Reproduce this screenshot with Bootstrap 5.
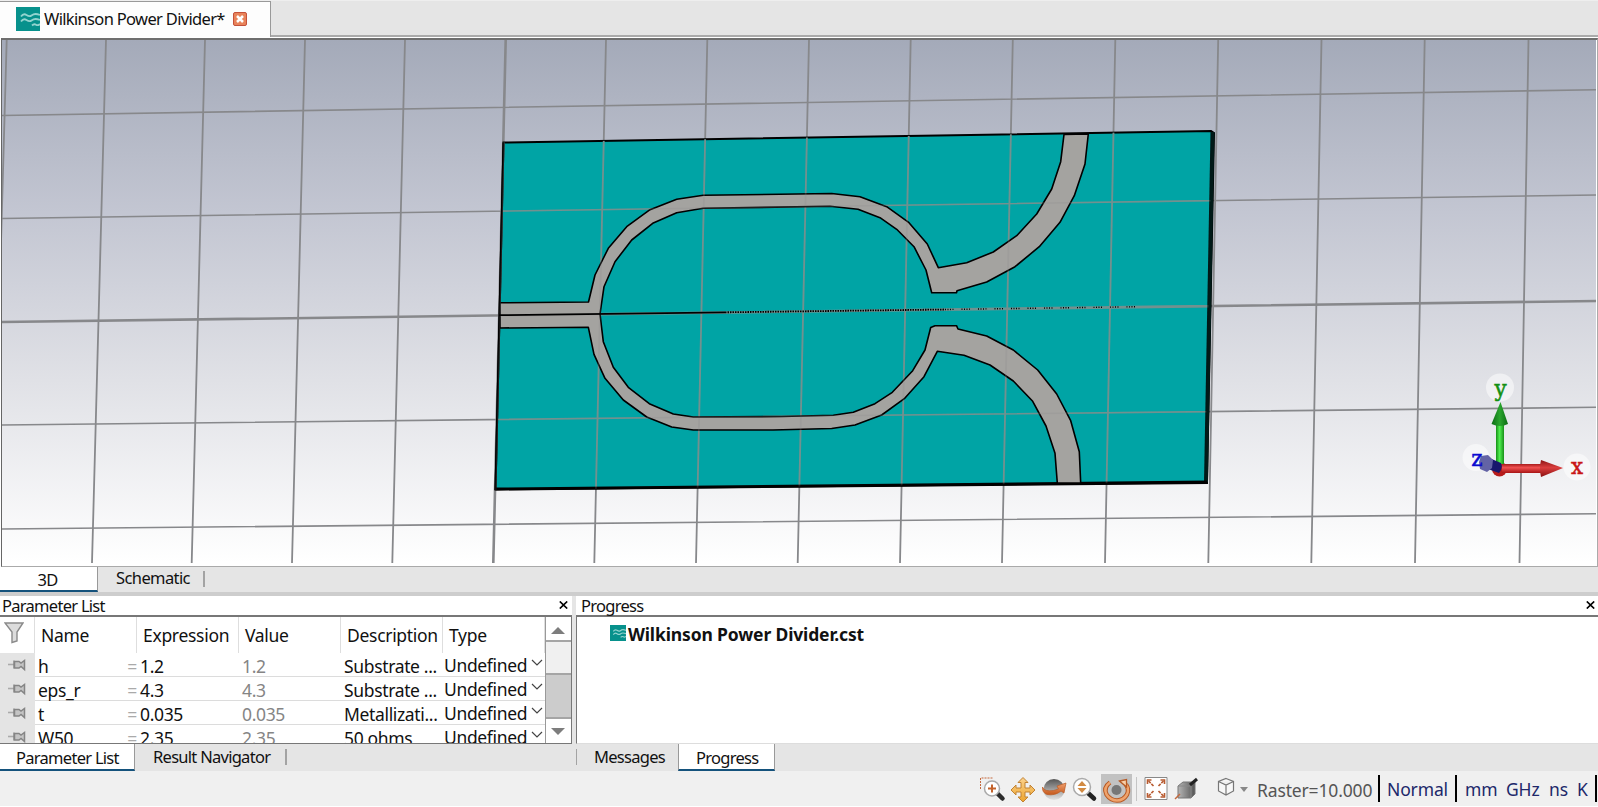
<!DOCTYPE html>
<html lang="en">
<head>
<meta charset="utf-8">
<meta name="viewport" content="width=device-width, initial-scale=1">
<title>Wilkinson Power Divider</title>
<link href="https://cdn.jsdelivr.net/npm/bootstrap@5.3.0/dist/css/bootstrap.min.css" rel="stylesheet">
<script src="https://cdn.jsdelivr.net/npm/bootstrap@5.3.0/dist/js/bootstrap.bundle.min.js"></script>
<style>
  body{height:807px;overflow:hidden;background:#fff;color:#111;font-family:"Noto Sans","Open Sans",sans-serif;font-size:17px;line-height:20px;white-space:nowrap}
  svg{display:block;flex:none}
  .ui{font-size:16.5px;letter-spacing:-.72px}
  .doc-strip{height:37px;background:#e5e5e5;border-bottom:2px solid #aaa;border-top:1px solid #eee}
  .doc-tab{width:271px;height:36px;background:#fdfdfd;border-top:1px solid #999;border-right:1px solid #999;padding:0 0 2px 16px;letter-spacing:-.67px}
  .view{height:529px;border:1px solid #aaa;border-top:2px solid #6e6e6e;border-left:1px solid #666;margin-top:1px;padding:0 1px 3px 0;margin-left:1px}
  .strip{background:#e5e5e5}
  .view-tabs{height:25px}
  .tab-on{background:#fff;border-right:1px solid #999;border-bottom:2px solid #14527c}
  .splitter{height:4px;background:#cdcdcd}
  .dock{height:175px;background:#e5e5e5}
  .dock-title{height:19px;background:#fff}
  .tick{width:2px;height:16px;background:#a3a3a3}
  .dock-body{height:129px;background:#fff;border:1px solid #777;border-top:2px solid #777;overflow:hidden}
  .grid-head{height:36px}
  .c0{width:35px}.c1,.c2,.c3,.c4,.c5{width:102px}
  .grid-head>div{border-right:1px solid #dedede;padding:8px 0 0 6px;letter-spacing:-.3px;font-size:17.5px}
  .prow{height:24px;font-size:17.5px;letter-spacing:-.35px}
  .prow>div{border-bottom:1px solid #dcdcdc;padding:3px 0 0 3px}
  .prow>.c0{background:#e4e4e4;border:0;padding:5px 0 0 8px}
  .prow>.c5{padding-top:2px}
  .faded{color:#858585}
  .eq{color:#aaa}
  .sbar{width:26px;background:#ccc;border-left:1px solid #999}
  .sbtn{height:25px;background:#fff;border-bottom:2px solid #a5a5a5}
  .status{height:35px;background:#f0f0f0}
  .status .txt{font-size:17.5px;color:#20286a;letter-spacing:-.15px}
  .vbar{width:2px;height:27px;background:#000}
</style>
</head>
<body>
<svg width="0" height="0" style="position:absolute">
  <defs>
    <symbol id="wave" viewBox="0 0 24 24"><path fill="#07918c" d="M0 0h24v24H0z"/><path d="M5 9.500q2.500-3.500 5.500-1.500t5 .5 4-1.500 4.500 1M5 14.500q2.500-3.500 5.500-1.500t5 .5 4-1.500 4.500 1M16 18.500q2-2 4-.8t4-.7" fill="none" stroke="#93d4cf" stroke-width="1.800"/></symbol>
    <symbol id="pin" viewBox="0 0 18 14"><path d="M0 6.500h6" stroke="#aaa" stroke-width="1.600"/><path d="M6 2.500v8M6.500 3.500h4.500l2 1.500 3.500-2.500v9L13 8.500l-2 1.500H6.500z" fill="#c4c4c4" stroke="#858585" stroke-width="1.500"/></symbol>
    <symbol id="chev" viewBox="0 0 12 8"><path d="M1 1l5 5 5-5" fill="none" stroke="#444" stroke-width="1.200"/></symbol>
    <symbol id="cross" viewBox="0 0 9 8"><path d="M.8.5l7.400 7M8.200.5l-7.400 7" stroke="#000" stroke-width="1.700"/></symbol>
    <linearGradient id="gold" x1="0" y1="0" x2="0" y2="1"><stop stop-color="#fbd28e"/><stop offset="1" stop-color="#eda52e"/></linearGradient>
    <linearGradient id="steel" x1="0" y1="0" x2="0" y2="1"><stop stop-color="#555"/><stop offset=".45" stop-color="#999"/><stop offset="1" stop-color="#e2e2e2"/></linearGradient>
    <linearGradient id="slab"><stop stop-color="#b5b5b5"/><stop offset="1" stop-color="#555"/></linearGradient>
    <linearGradient id="orange" x1="0" y1="0" x2="0" y2="1"><stop stop-color="#f0a070"/><stop offset="1" stop-color="#c4581c"/></linearGradient>
  </defs>
</svg>

<div class="doc-strip ui">
  <div class="doc-tab d-flex align-items-center">
    <svg width="24" height="24"><use href="#wave"/></svg>
    <span class="ms-1" style="width:189px">Wilkinson Power Divider*</span>
    <svg width="14" height="14" viewBox="0 0 14 14"><rect x=".5" y=".5" width="13" height="13" rx="1.500" fill="#e8835a" stroke="#c4513a"/><path d="M4 4l6 6M10 4l-6 6" stroke="#fff" stroke-width="2.500"/></svg>
  </div>
</div>

<div class="view">
<svg width="1594" height="523" viewBox="2 40 1594 523" preserveAspectRatio="none">
  <defs>
    <linearGradient id="sky" x1="0" y1="0" x2="0" y2="1"><stop stop-color="#a4aab9"/><stop offset=".33" stop-color="#c3c6d2"/><stop offset=".65" stop-color="#e0e1e6"/><stop offset="1" stop-color="#fff"/></linearGradient>
    <linearGradient id="gx" x1="0" y1="0" x2="0" y2="1"><stop stop-color="#a91c1c"/><stop offset=".4" stop-color="#f05050"/><stop offset="1" stop-color="#a81515"/></linearGradient>
    <linearGradient id="gy"><stop stop-color="#159015"/><stop offset=".45" stop-color="#50f050"/><stop offset="1" stop-color="#189018"/></linearGradient>
    <linearGradient id="gyh"><stop stop-color="#0c6c14"/><stop offset=".5" stop-color="#29a52d"/><stop offset="1" stop-color="#0d6c14"/></linearGradient>
    <linearGradient id="gxh" x1="0" y1="0" x2="0" y2="1"><stop stop-color="#8c1414"/><stop offset=".45" stop-color="#da3e3e"/><stop offset="1" stop-color="#8a1010"/></linearGradient>
    <clipPath id="brd"><path d="M503.500 142.500L1212 131 1205 482 495.500 490z"/></clipPath>
    <g id="mesh">
      <path d="M6.700 40L-8 563M106 40L92 563M205 40L191.700 563M305 40L292 563M405 40L392.300 563M606 40L594.300 563M707.300 40L696 563M809 40L797.700 563M910.700 40L900 563M1012.800 40L1002 563M1115.300 40L1105 563M1218.200 40L1208.300 563M1321.500 40L1311.300 563M1424.700 40L1415 563M1528.500 40L1519.500 563" stroke-width="1.800"/>
      <path d="M2 115.500L1596 89.700M2 218.500L1596 195M2 425L1596 407.300M2 529L1596 513.700" stroke-width="1.600"/>
      <path d="M505.700 40L493.300 563M2 322L1596 301" stroke-width="2.600"/>
    </g>
  </defs>
  <path fill="url(#sky)" d="M2 40h1594v523H2z"/>
  <use href="#mesh" stroke="#87888b"/>
  <path d="M503.500 142.500L1211 131l3 2L1207 483 495.500 489.500z" fill="#00a4a6" stroke="#000" stroke-width="2"/>
  <use href="#mesh" stroke="#6c9491" clip-path="url(#brd)"/>
  <path d="M1212.500 132L1206 482" stroke="#011a18" stroke-width="4"/><path d="M495.500 489L1207 482" stroke="#000" stroke-width="2.800"/>
  <path d="M503.500 142.500L495.500 490" stroke="#000" stroke-width="2"/>
  <path fill="#a5a3a0" stroke="#000" stroke-width="1.600" stroke-linejoin="round" d="M500 302.800L588.500 302 595 275 608.300 248.300 626.700 226.700 650 209.700 676.700 199.300 703.300 195.300 831.700 193.500 860 196.700 886.700 206.700 909 222.700 927.300 244 938.300 267.700 966.700 262.700 993.300 252 1016.700 235.700 1036.700 214 1051.700 189 1060.700 161.700 1064 134.500 1088.300 134 1085 164 1074.300 195.700 1060 222.300 1039.300 246.700 1015 266.700 986.700 282 957 290.700 956.500 292.700 931.700 292.700 926 270 914 246.700 896.700 229.300 880 217.700 858 209.300 830 206.300 703.300 208.300 676.700 212.700 652.700 223.300 631.700 240 615 261.700 604 286.700 600 314 603.300 341.700 613.300 367.300 628.300 387.300 649.300 403.700 673.300 414 693.300 417 781.700 416.500 833.300 415.300 853.300 412.300 875 403.700 892.300 392.300 912.700 370.700 925 350 930.700 327.500 935 325.700 956.500 325.700 958 329 986.700 336 1013.300 350 1037.700 370 1056.700 394 1070.700 420.700 1079.300 451.700 1080.700 483 1057.300 483 1055 453.300 1046 426 1032.700 401.300 1013.300 381 990 365 964 355.300 937.300 351.300 924 376.700 904.300 398.700 881.700 415 855 425 831.700 428.500 773 430 693.300 430 671.700 427 646.700 417 623.300 400 605 378.300 594 354.300 588.300 327.200 500 328z"/>
  <use href="#mesh" stroke="#888" opacity=".22" clip-path="url(#brd)"/>
  <path d="M499 315.200L725 312.300" stroke="#000" stroke-width="1.700"/>
  <path d="M725 312.300L945 309.500" stroke="#000" stroke-width="1.800" stroke-dasharray="1.500 1"/>
  <path d="M945 309.500L1140 306.700" stroke="#000" stroke-width="1.400" stroke-dasharray="1 1.500 1 1.500 1 1.500 1 8"/>
  <g fill="#fff" fill-opacity=".5"><circle cx="1500" cy="387.500" r="14"/><circle cx="1476" cy="457.500" r="13.500"/><circle cx="1577" cy="467" r="13.500"/></g>
  <circle cx="1499.500" cy="469" r="7.500" fill="#b71b1b"/>
  <path d="M1496 422h8v42h-8z" fill="url(#gy)"/><path d="M1500.500 402l7.500 22q-8 4-16.500 0z" fill="url(#gyh)"/>
  <path d="M1502 464h39v9h-39z" fill="url(#gx)"/><path d="M1563 468l-22-8q-2 8 0 17z" fill="url(#gxh)"/>
  <path d="M1487 457l14 6q2 5-2 10l-14-5z" fill="#17176d"/><path d="M1481 456l7-1 5 5-1 8-5 4-7-3-1-7z" fill="#6363a5"/>
  <g font-family="'DejaVu Serif',serif" text-anchor="middle" font-size="21.500" stroke-width=".5"><text x="1500.500" y="395.500" fill="#129012" stroke="#129012">y</text><text x="1477" y="465.500" fill="#0b0bd0" stroke="#0b0bd0">z</text><text x="1577" y="474" fill="#c91616" stroke="#c91616">x</text></g>
</svg>
</div>

<div class="strip view-tabs ui d-flex">
  <div class="tab-on text-center" style="width:98px;padding:3px 2px 0 0">3D</div>
  <div style="width:105px;padding:1px 0 0 18px;letter-spacing:-.6px">Schematic</div>
  <div class="tick" style="margin-top:4px"></div>
</div>
<div class="splitter"></div>

<div class="dock d-flex">
  <div style="width:572px">
    <div class="dock-title ui d-flex justify-content-between" style="padding-left:2px"><span>Parameter List</span><svg width="9" height="8" style="margin:5px 4px 0 0"><use href="#cross"/></svg></div>
    <div class="dock-body d-flex border-start-0">
      <div style="width:545px">
        <div class="grid-head d-flex">
          <div class="c0" style="padding:5px 0 0 4px"><svg width="20" height="22" viewBox="0 0 20 22"><path d="M1 1h18l-6 9v9l-5 1.500V10z" fill="#dcdcdc" stroke="#8a8a8a" stroke-width="1.400"/></svg></div>
          <div class="c1">Name</div><div class="c2">Expression</div><div class="c3">Value</div><div class="c4">Description</div><div class="c5">Type</div>
        </div>
        <div class="prow d-flex"><div class="c0"><svg width="18" height="14"><use href="#pin"/></svg></div><div class="c1 d-flex justify-content-between"><span>h</span><span class="eq">=</span></div><div class="c2">1.2</div><div class="c3 faded">1.2</div><div class="c4">Substrate ...</div><div class="c5 d-flex ps-0"><span class="ps-0" style="width:87px;margin-left:1px">Undefined</span><svg width="12" height="8" class="mt-1"><use href="#chev"/></svg></div></div>
        <div class="prow d-flex"><div class="c0"><svg width="18" height="14"><use href="#pin"/></svg></div><div class="c1 d-flex justify-content-between"><span>eps_r</span><span class="eq">=</span></div><div class="c2">4.3</div><div class="c3 faded">4.3</div><div class="c4">Substrate ...</div><div class="c5 d-flex ps-0"><span style="width:87px;margin-left:1px">Undefined</span><svg width="12" height="8" class="mt-1"><use href="#chev"/></svg></div></div>
        <div class="prow d-flex"><div class="c0"><svg width="18" height="14"><use href="#pin"/></svg></div><div class="c1 d-flex justify-content-between"><span>t</span><span class="eq">=</span></div><div class="c2">0.035</div><div class="c3 faded">0.035</div><div class="c4">Metallizati...</div><div class="c5 d-flex ps-0"><span style="width:87px;margin-left:1px">Undefined</span><svg width="12" height="8" class="mt-1"><use href="#chev"/></svg></div></div>
        <div class="prow d-flex"><div class="c0"><svg width="18" height="14"><use href="#pin"/></svg></div><div class="c1 d-flex justify-content-between"><span>W50</span><span class="eq">=</span></div><div class="c2">2.35</div><div class="c3 faded">2.35</div><div class="c4">50 ohms</div><div class="c5 d-flex ps-0"><span style="width:87px;margin-left:1px">Undefined</span><svg width="12" height="8" class="mt-1"><use href="#chev"/></svg></div></div>
      </div>
      <div class="sbar d-flex flex-column">
        <div class="sbtn"><svg width="25" height="23" viewBox="0 0 25 23"><path d="M5 17h14l-7-7z" fill="#7d7d7d"/></svg></div>
        <div class="sbtn" style="background:#f0f0f0;height:33px"></div>
        <div class="mt-auto" style="height:26px;background:#fff;border-top:2px solid #a5a5a5"><svg width="25" height="23" viewBox="0 0 25 23"><path d="M5 9h14l-7 7z" fill="#7d7d7d"/></svg></div>
      </div>
    </div>
    <div class="ui d-flex" style="height:27px">
      <div class="tab-on" style="width:135px;padding:4px 0 0 16px">Parameter List</div>
      <div style="width:150px;padding:3px 0 0 18px">Result Navigator</div>
      <div class="tick" style="margin-top:5px"></div>
    </div>
  </div>
  <div style="width:1022px;margin-left:4px">
    <div class="dock-title ui d-flex justify-content-between" style="padding-left:5px"><span>Progress</span><svg width="9" height="8" style="margin:5px 3px 0 0"><use href="#cross"/></svg></div>
    <div class="dock-body d-flex align-items-start border-end-0" style="border-bottom-color:#ddd;padding:8px 0 0 33px">
      <svg width="16" height="16"><use href="#wave"/></svg><span class="fw-bold" style="margin:-1px 0 0 2px;font-size:17.500px;letter-spacing:-.14px">Wilkinson Power Divider.cst</span>
    </div>
    <div class="ui d-flex" style="height:27px">
      <div class="tick" style="width:1px;margin-top:5px"></div>
      <div style="width:101px;padding:3px 0 0 17px">Messages</div>
      <div class="tab-on" style="width:97px;padding:4px 0 0 17px;border-left:1px solid #999">Progress</div>
    </div>
  </div>
</div>

<div class="status d-flex align-items-center" style="padding-left:980px">
  <svg width="398" height="35" viewBox="980 771 398 35" style="margin-right:-121px">
    <path d="M1101 774h31v30h-31z" fill="#c2c2c2"/><path d="M1136.500 777v24" stroke="#c5c5c5"/>
    <path d="M980.500 789v-11h13" fill="none" stroke="#c4683c" stroke-dasharray="2 1"/>
    <path d="M997 793l5.500 5.500" stroke="#2b2b2b" stroke-width="4.500" stroke-linecap="round"/><circle cx="992" cy="788.500" r="7.500" fill="#fff" stroke="#aaa" stroke-width="1.500"/><path d="M992 784.500v8M988 788.500h8" stroke="#c4632b" stroke-width="2"/>
    <path d="M1023 777.500l5 5h-3v5.500h5v-3l5 5-5 5v-3h-5v5h3l-5 5-5-5h3v-5h-5v3l-5-5 5-5v3h5v-5.500h-3z" fill="url(#gold)" stroke="#c18233"/>
    <circle cx="1054" cy="789.500" r="10.500" fill="url(#steel)"/><path d="M1042.500 787q2 5 11 3.500l5-1.500-1.500-3 9-3-2 10-3-2q-6 5-14 3.500-5-2-4.500-7.500z" fill="url(#orange)" stroke="#bb5b24" stroke-width=".7"/>
    <path d="M1088 793l6 5.500" stroke="#222" stroke-width="4.500" stroke-linecap="round"/><circle cx="1082" cy="787" r="8.500" fill="#fff" stroke="#aaa" stroke-width="1.500"/><path d="M1077.500 786l4.500-5 4.500 5zM1077.500 788h9l-4.500 5z" fill="#d28b43"/>
    <circle cx="1116.500" cy="790" r="5" fill="#777"/><path d="M1110 782.500q-7 5-3.500 12 4 6 10.500 6t10-6q2.500-5-1-10" fill="none" stroke="#b75a25" stroke-width="4.500"/><path d="M1110 782.500q-7 5-3.500 12 4 6 10.500 6t10-6q2.500-5-1-10" fill="none" stroke="#efa36c" stroke-width="2.500"/><path d="M1119.500 781l7-1.500v7.500z" fill="#f8cfa8" stroke="#b75a25" stroke-width="1.300"/>
    <path d="M1145 777.500h22v22h-22z" fill="#fff" stroke="#888"/><g stroke="#b85b31" stroke-width="1.600" fill="none"><path d="M1153.500 786l-6-6M1158.500 786l6-6M1153.500 791l-6 6M1158.500 791l6 6" stroke-dasharray="3 1"/><path d="M1147.500 784v-4h4M1160.500 780h4v4M1147.500 793v4h4M1160.500 797h4v-4"/></g>
    <path d="M1178 786l5-4h12v12l-4 4h-13z" fill="url(#slab)" stroke="#777"/><path d="M1178 786h13l4-4M1191 786v12" stroke="#888" fill="none"/><path d="M1175 799l5-5" stroke="#c4683c" stroke-width="1.500"/><path d="M1190 785l7-6" stroke="#222" stroke-width="3"/>
    <path d="M1226 778.500l7.500 3v9.500l-7.500 4-7.500-4v-9.500zM1218.500 781.500l7.500 3.500 7.500-3.500M1226 785v10" fill="#f8f8f8" stroke="#777" stroke-width="1.200"/>
    <path d="M1240 787h8l-4 5z" fill="#888"/>
  </svg>
  <div class="txt" style="width:121px;color:#555;padding-top:3px">Raster=10.000</div>
  <div class="vbar"></div><div class="txt" style="width:75px;padding:1px 0 0 7px">Normal</div>
  <div class="vbar"></div><div class="txt" style="width:49px;padding:1px 0 0 8px">mm</div>
  <div class="txt" style="width:43px;padding-top:1px">GHz</div><div class="txt" style="width:28px;padding-top:1px">ns</div><div class="txt" style="width:18px;padding-top:1px">K</div><div class="vbar"></div>
</div>
</body>
</html>
